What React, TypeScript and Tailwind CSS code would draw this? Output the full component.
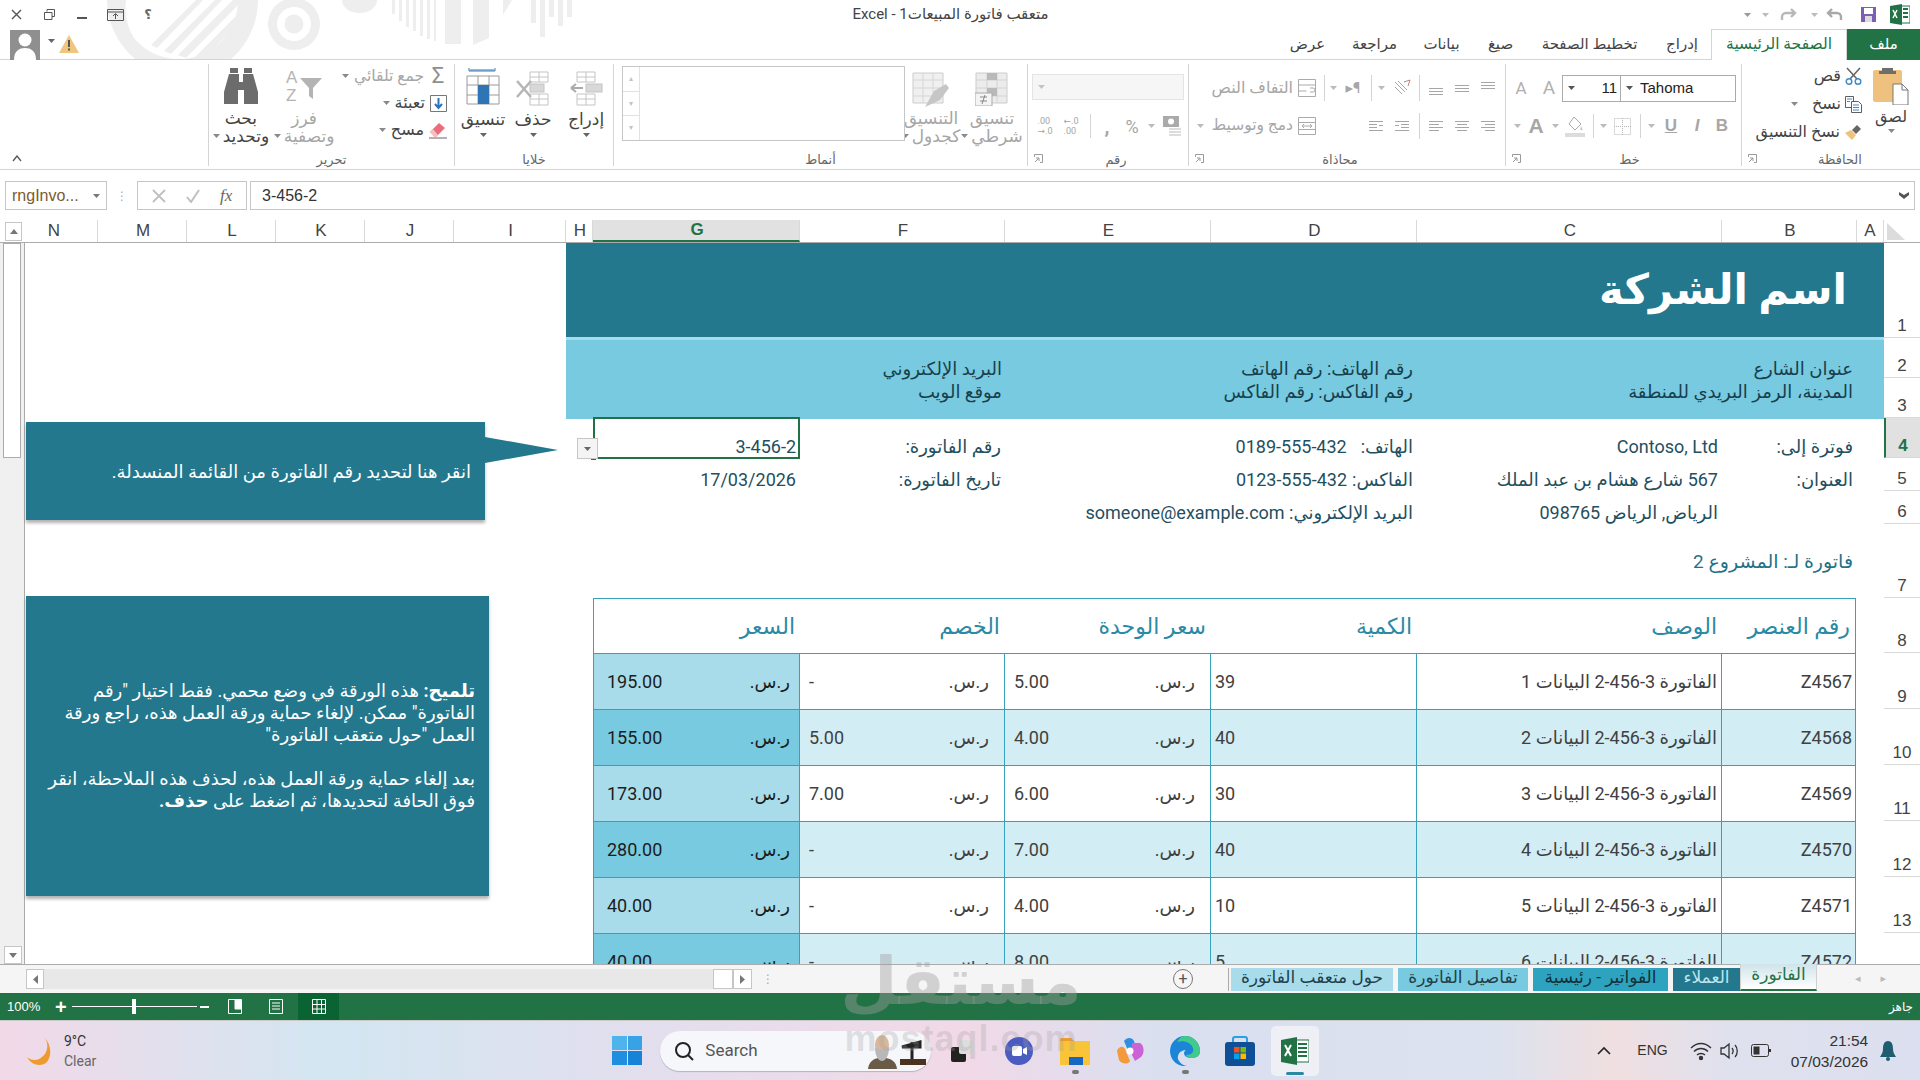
import type { ReactNode } from "react"

const sep = "w-px self-stretch bg-[#d4d4d4]"

function Caret({ color = "#8a8a8a" }: { color?: string }) {
  return (
    <svg width="7" height="4" viewBox="0 0 7 4">
      <path d="M0 0h7L3.5 4z" fill={color} />
    </svg>
  )
}

function Launcher() {
  return (
    <svg width="9" height="9" viewBox="0 0 9 9" fill="none" stroke="#9a9a9a">
      <path d="M.5 3V.5H8.5V8.5H6M1 8l4-4M5 7V4H2" />
    </svg>
  )
}

function Group({ className, label, labelClass = "", launcher, children }: { className: string; label: string; labelClass?: string; launcher?: boolean; children: ReactNode }) {
  return (
    <div className={`relative flex h-[102px] shrink-0 flex-col border-l border-[#d4d4d4] ${className}`}>
      <div className="h-[87px]">{children}</div>
      <div className={`h-[15px] text-center text-[13px] leading-[18px] text-[#666] ${labelClass}`}>{label}</div>
      {launcher ? (
        <div className="absolute bottom-[3px] left-[6px]">
          <Launcher />
        </div>
      ) : null}
    </div>
  )
}

function Slot({ className, children }: { className: string; children?: ReactNode }) {
  return <div className={`flex shrink-0 items-center justify-center ${className}`}>{children}</div>
}

function Lines({ rows }: { rows: number[][] }) {
  return (
    <svg width="16" height="14" viewBox="0 0 16 14" stroke="#a6a6a6">
      {rows.map((r, i) => (
        <path key={i} d={`M${r[0]} ${r[2]}.5H${r[1]}`} />
      ))}
    </svg>
  )
}

function BigLabel({ top, bottom, color = "text-[#a6a6a6]" }: { top: string; bottom: string; color?: string }) {
  return (
    <div className={`flex flex-col items-center text-[17px] leading-[18px] ${color}`}>
      <span className="whitespace-nowrap">{top}</span>
      <span className="flex items-center gap-[3px] whitespace-nowrap">
        {bottom}
        <Caret />
      </span>
    </div>
  )
}

function Ribbon() {
  return (
    <div dir="rtl" className="flex h-[110px] items-start border-b border-[#d4d4d4] bg-white pt-[4px]">
      <Group className="w-[179px]" label="الحافظة" labelClass="pl-[18px]" launcher>
        <div className="flex">
          <div className="flex w-[58px] flex-col items-center pt-[3px] text-[16px] text-[#444]">
            <svg width="36" height="38" viewBox="0 0 36 38">
              <rect x="0" y="3" width="29" height="32" rx="2" fill="#eec17e" />
              <path d="M9 4V1h11v3h3v3H6V4z" fill="#6e6e6e" />
              <path d="M20 17h9l6 6v15H20z" fill="#fff" stroke="#777" />
              <path d="M29 17v6h6" fill="none" stroke="#777" />
            </svg>
            <span className="mt-[2px] leading-[20px]">لصق</span>
            <div className="mt-[2px] leading-[8px]">
              <Caret />
            </div>
          </div>
          <div className="flex flex-col gap-[6px] pt-[1px] text-[16px] leading-[22px] text-[#444]">
            <div className="flex items-center gap-[4px]">
              <svg width="17" height="18" viewBox="0 0 17 18" fill="none">
                <path d="M2 1l10 11M15 1L5 12" stroke="#666" strokeWidth="1.6" />
                <circle cx="4" cy="14.5" r="2.8" stroke="#3d8bc9" strokeWidth="1.4" />
                <circle cx="13" cy="14.5" r="2.8" stroke="#3d8bc9" strokeWidth="1.4" />
              </svg>
              <span>قص</span>
            </div>
            <div className="flex items-center gap-[4px]">
              <svg width="17" height="17" viewBox="0 0 17 17" fill="#fff" stroke="#5f5f5f">
                <path d="M.5.5h8v11h-8z" />
                <path d="M6.5 5.5h7l3 3v8h-10z" />
                <path d="M8 9h6M8 11.5h6M8 14h6M2 3h5M2 5.500h3" stroke="#3d8bc9" />
              </svg>
              <span>نسخ</span>
              <span className="mr-[10px]">
                <Caret />
              </span>
            </div>
            <div className="flex items-center gap-[4px]">
              <svg width="18" height="17" viewBox="0 0 18 17">
                <path d="M1 9l7 7 4-5-5-5z" fill="#efc27b" />
                <path d="M8 6l5-5 4 4-5 5z" fill="#666" />
              </svg>
              <span className="whitespace-nowrap">نسخ التنسيق</span>
            </div>
          </div>
        </div>
      </Group>

      <Group className="w-[236px]" label="خط" labelClass="pl-[12px]" launcher>
        <div className="flex items-center pt-[10px] pr-[5px]">
          <div dir="ltr" className="flex h-[27px] w-[174px] flex-row-reverse border border-[#ababab] text-[14px] text-[#222]">
            <div className="flex w-[114px] items-center gap-[7px] pl-[5px]">
              <Caret color="#555" />
              <span className="font-['Liberation_Sans',sans-serif] text-[15px]">Tahoma</span>
            </div>
            <div className="flex flex-1 items-center justify-between border-r border-[#ababab] pr-[3px] pl-[5px]">
              <Caret color="#555" />
              <span className="font-['Liberation_Sans',sans-serif] text-[15px]">11</span>
            </div>
          </div>
          <Slot className="w-[26px] text-[19px] text-[#b0b0b0]">A</Slot>
          <Slot className="w-[30px] text-[17px] text-[#b0b0b0]">A</Slot>
        </div>
        <div dir="rtl" className="flex h-[33px] items-center pt-[14px] pr-[7px] font-['Liberation_Sans',sans-serif] text-[#a6a6a6]">
          <Slot className="w-[24px] text-[17px] font-bold">B</Slot>
          <Slot className="w-[26px] text-[17px] italic font-bold">I</Slot>
          <Slot className="w-[26px] text-[17px] font-bold underline">U</Slot>
          <Slot className="w-[14px]"><Caret color="#bbb" /></Slot>
          <Slot className="h-[24px] w-[8px]"><div className={sep} /></Slot>
          <Slot className="w-[28px]">
            <svg width="17" height="17" viewBox="0 0 17 17" fill="none" stroke="#b5b5b5" strokeDasharray="1 1">
              <path d="M.5.5h16v16H.5zM8.500 0v17M0 8.500h17" />
            </svg>
          </Slot>
          <Slot className="w-[10px]"><Caret color="#bbb" /></Slot>
          <Slot className="h-[24px] w-[10px]"><div className={sep} /></Slot>
          <Slot className="w-[26px]">
            <svg width="20" height="21" viewBox="0 0 20 21" fill="none">
              <path d="M9 1l7 7-6 6-6-6z" stroke="#aaa" />
              <path d="M16 10l2 4h-3z" fill="#ccc" />
              <rect x="0" y="17" width="20" height="4" fill="#dcdcdc" />
            </svg>
          </Slot>
          <Slot className="w-[14px]"><Caret color="#bbb" /></Slot>
          <Slot className="w-[24px] text-[21px] font-bold">A</Slot>
          <Slot className="w-[14px]"><Caret color="#bbb" /></Slot>
        </div>
      </Group>

      <Group className="w-[317px]" label="محاذاة" labelClass="pr-[14px]" launcher>
        <div className="flex h-[40px] items-center pr-[4px] pt-[8px]">
          <Slot className="w-[26px]"><Lines rows={[[1, 15, 1], [1, 15, 4], [1, 15, 7]]} /></Slot>
          <Slot className="w-[26px]"><Lines rows={[[1, 15, 4], [1, 15, 7], [1, 15, 10]]} /></Slot>
          <Slot className="w-[26px]"><Lines rows={[[1, 15, 7], [1, 15, 10], [1, 15, 13]]} /></Slot>
          <Slot className="h-[26px] w-[8px]"><div className={sep} /></Slot>
          <Slot className="w-[28px]">
            <svg width="19" height="18" viewBox="0 0 19 18" fill="none" stroke="#aaa">
              <path d="M3 3l10 10M6 2l9 9M3 8l7 7" />
              <path d="M12 3l6-2-2 6" stroke="#b88" />
            </svg>
          </Slot>
          <Slot className="w-[12px]"><Caret color="#bbb" /></Slot>
          <Slot className="h-[26px] w-[8px]"><div className={sep} /></Slot>
          <Slot className="w-[28px] text-[15px] text-[#a6a6a6]">
            <span dir="ltr">▸¶</span>
          </Slot>
          <Slot className="w-[12px]"><Caret color="#bbb" /></Slot>
          <Slot className="h-[26px] w-[6px]"><div className={sep} /></Slot>
          <Slot className="w-[28px]">
            <svg width="18" height="18" viewBox="0 0 18 18" fill="none" stroke="#aaa">
              <path d="M.5.5h17v17H.5zM.5 6h17M.5 12h8M12 9h3a2 2 0 010 4h-3" />
            </svg>
          </Slot>
          <span className="whitespace-nowrap text-[16px] text-[#a6a6a6]">التفاف النص</span>
        </div>
        <div className="flex h-[38px] items-center pr-[4px] pt-[6px]">
          <Slot className="w-[26px]"><Lines rows={[[1, 15, 2], [5, 15, 5], [1, 15, 8], [5, 15, 11]]} /></Slot>
          <Slot className="w-[26px]"><Lines rows={[[1, 15, 2], [3, 13, 5], [1, 15, 8], [3, 13, 11]]} /></Slot>
          <Slot className="w-[26px]"><Lines rows={[[1, 15, 2], [1, 11, 5], [1, 15, 8], [1, 11, 11]]} /></Slot>
          <Slot className="h-[26px] w-[8px]"><div className={sep} /></Slot>
          <Slot className="w-[26px]"><Lines rows={[[1, 15, 2], [7, 15, 5], [1, 5, 6], [7, 15, 8], [1, 15, 11]]} /></Slot>
          <Slot className="w-[26px]"><Lines rows={[[1, 15, 2], [1, 9, 5], [11, 15, 6], [1, 9, 8], [1, 15, 11]]} /></Slot>
          <div className="w-[42px]" />
          <Slot className="w-[28px]">
            <svg width="18" height="18" viewBox="0 0 18 18" fill="none" stroke="#aaa">
              <path d="M.5.5h17v17H.5zM.5 5.500h17M.5 12.500h17M4 9h10M4 9l2-2M4 9l2 2M14 9l-2-2M14 9l-2 2" />
            </svg>
          </Slot>
          <span className="whitespace-nowrap text-[15.5px] text-[#a6a6a6]">دمج وتوسيط</span>
          <span className="mr-[8px]"><Caret color="#bbb" /></span>
        </div>
      </Group>

      <Group className="w-[161px]" label="رقم" labelClass="pl-[16px]" launcher>
        <div className="h-[40px] pt-[10px] pr-[4px]">
          <div dir="ltr" className="flex h-[26px] w-[152px] items-center border border-[#e4e4e4] bg-[#f6f6f6] pl-[5px]">
            <Caret color="#c4c4c4" />
          </div>
        </div>
        <div className="flex h-[38px] items-center pt-[6px] text-[#a6a6a6]">
          <Slot className="w-[32px]">
            <svg width="19" height="20" viewBox="0 0 19 20">
              <rect x="0" y="0" width="16" height="11" fill="#aaa" />
              <circle cx="8" cy="5.500" r="3" fill="#fff" />
              <path d="M6 13h12M6 16h12M6 19h12" stroke="#bbb" />
            </svg>
          </Slot>
          <Slot className="w-[10px]"><Caret color="#bbb" /></Slot>
          <Slot className="w-[28px] text-[18px]">%</Slot>
          <Slot className="w-[22px] text-[20px] font-bold">,</Slot>
          <Slot className="h-[24px] w-[12px]"><div className={sep} /></Slot>
          <Slot className="w-[26px]">
            <div dir="ltr" className="text-[9px] leading-[10px]">←.0<br />.00</div>
          </Slot>
          <Slot className="w-[26px]">
            <div dir="ltr" className="text-[9px] leading-[10px]">.00<br />→.0</div>
          </Slot>
        </div>
      </Group>

      <Group className="w-[414px]" label="أنماط">
        <div className="flex">
          <div className="flex w-[70px] flex-col items-center pt-[8px]">
            <svg width="34" height="34" viewBox="0 0 34 34" fill="none">
              <path d="M1 1h31v30H1z" fill="#ececec" stroke="#ccc" />
              <path d="M1 8h31M1 16h31M1 24h31M12 1v30M22 1v30" stroke="#d2d2d2" />
              <rect x="12" y="1" width="10" height="7" fill="#b9b9b9" />
              <rect x="12" y="16" width="10" height="8" fill="#b9b9b9" />
              <rect x="0" y="21" width="17" height="13" fill="#f4f4f4" stroke="#aaa" />
              <path d="M5 25h7M5 29h7M10 23l-3 9" stroke="#888" />
            </svg>
            <div className="mt-[3px]"><BigLabel top="تنسيق" bottom="شرطي" /></div>
          </div>
          <div className="flex w-[52px] flex-col items-center pt-[8px]">
            <svg width="40" height="36" viewBox="0 0 40 36" fill="none">
              <path d="M2 1h30v30H2z" fill="#f0f0f0" stroke="#ccc" />
              <path d="M2 8h30M2 16h30M2 24h30M12 1v30M22 1v30" stroke="#d6d6d6" />
              <path d="M14 35l9-16 12-7 3 4-9 12z" fill="#c6c6c6" />
            </svg>
            <div className="mt-[1px]"><BigLabel top="التنسيق" bottom="كجدول" /></div>
          </div>
          <div className="mt-[2px] flex h-[75px] w-[283px] border border-[#c6c6c6] bg-white">
            <div className="flex-1" />
            <div className="flex w-[17px] flex-col border-r border-[#e2e2e2] text-[8px] text-[#c4c4c4]">
              <div className="flex flex-1 items-center justify-center border-b border-[#e2e2e2]">▴</div>
              <div className="flex flex-1 items-center justify-center border-b border-[#e2e2e2]">▾</div>
              <div className="flex flex-1 items-center justify-center">▾</div>
            </div>
          </div>
        </div>
      </Group>

      <Group className="w-[159px]" label="خلايا">
        <div className="flex pt-[4px] text-[17px] leading-[21px] text-[#444]">
          <div className="flex w-[54px] flex-col items-center">
            <svg width="34" height="38" viewBox="0 0 34 38" fill="none" stroke="#c4c4c4">
              <path d="M8 4h18v10H8zM17 4v10M8 9h18M8 26h18v11H8zM17 26v11M8 31h18" />
              <rect x="17" y="16" width="16" height="8" fill="#d8d8d8" />
              <path d="M2 20h12M2 20l5-4M2 20l5 4" stroke="#aaa" strokeWidth="2" />
            </svg>
            <span className="mt-[3px]">إدراج</span>
            <div className="mt-[3px] leading-[8px]"><Caret color="#666" /></div>
          </div>
          <div className="flex w-[52px] flex-col items-center">
            <svg width="36" height="38" viewBox="0 0 36 38" fill="none" stroke="#c4c4c4">
              <path d="M15 4h18v10H15zM24 4v10M15 9h18M15 26h18v11H15zM24 26v11M15 31h18" />
              <rect x="15" y="16" width="14" height="8" fill="#d8d8d8" />
              <path d="M2 13l14 16M16 13L2 29" stroke="#b5b5b5" strokeWidth="2.500" />
            </svg>
            <span className="mt-[3px]">حذف</span>
            <div className="mt-[3px] leading-[8px]"><Caret color="#666" /></div>
          </div>
          <div className="flex w-[48px] flex-col items-center">
            <svg width="34" height="38" viewBox="0 0 34 38" fill="none" stroke="#9a9a9a">
              <path d="M3 0v3h26V0M4 2h24" stroke="#3d7bb8" />
              <path d="M1 8h32v28H1zM1 17h32M1 27h32M12 8v28M23 8v28" />
              <rect x="12" y="17" width="11" height="10" fill="#2f75b5" stroke="none" />
              <rect x="12" y="27" width="11" height="9" fill="#2f75b5" stroke="none" />
            </svg>
            <span className="mt-[3px]">تنسيق</span>
            <div className="mt-[3px] leading-[8px]"><Caret color="#666" /></div>
          </div>
        </div>
      </Group>

      <Group className="w-[246px]" label="تحرير">
        <div className="flex">
          <div className="flex w-[119px] flex-col gap-[5px] pt-[1px] pr-[7px] text-[16px] leading-[22px]">
            <div className="flex items-center gap-[5px] text-[#a6a6a6]">
              <span className="w-[18px] text-center text-[22px] leading-[22px] text-[#8f8f8f]">Σ</span>
              <span className="whitespace-nowrap text-[15.5px]">جمع تلقائي</span>
              <Caret />
            </div>
            <div className="flex items-center gap-[5px] text-[#444]">
              <svg width="17" height="17" viewBox="0 0 17 17" fill="none">
                <path d="M.5.5h16v16H.5z" stroke="#777" />
                <path d="M8.500 3v9M5 9l3.500 4L12 9" stroke="#2f75b5" strokeWidth="2" />
              </svg>
              <span>تعبئة</span>
              <Caret />
            </div>
            <div className="flex items-center gap-[5px] text-[#444]">
              <svg width="18" height="17" viewBox="0 0 18 17">
                <path d="M1 10l9-9 6 5-9 9z" fill="#e96d7a" />
                <path d="M1 10l4 5h2l2-2-5-6z" fill="#f3c0c0" />
                <path d="M0 16h18" stroke="#666" />
              </svg>
              <span>مسح</span>
              <Caret />
            </div>
          </div>
          <div className="flex w-[63px] flex-col items-center pt-[4px]">
            <svg width="36" height="36" viewBox="0 0 36 36" direction="ltr">
              <text x="0" y="15" fontSize="17" fill="#b4b4b4" fontFamily="Liberation Sans" direction="ltr">A</text>
              <text x="0" y="33" fontSize="17" fill="#b4b4b4" fontFamily="Liberation Sans" direction="ltr">Z</text>
              <path d="M14 10h22l-9 10v11l-4-3v-8z" fill="#b4b4b4" />
            </svg>
            <div className="mt-[5px]"><BigLabel top="فرز" bottom="وتصفية" /></div>
          </div>
          <div className="flex w-[64px] flex-col items-center pt-[4px]">
            <svg width="34" height="36" viewBox="0 0 34 36" fill="#6c6c6c">
              <path d="M6 0h8v5H6zM20 0h8v5h-8z" />
              <path d="M5 6h10v8h4V6h10l5 18v12H20V22h-6v14H0V24z" />
            </svg>
            <div className="mt-[5px]"><BigLabel top="بحث" bottom="وتحديد" color="text-[#444]" /></div>
          </div>
        </div>
      </Group>

      <div className="flex h-[102px] flex-1 items-end pb-[4px] pr-[186px] text-[#555]">
        <svg width="10" height="7" viewBox="0 0 10 7" fill="none" stroke="#555" strokeWidth="1.300">
          <path d="M1 6l4-5 4 5" />
        </svg>
      </div>
    </div>
  )
}

function TitleBar() {
  return (
    <div className="relative h-[29px]">
      <div className="flex h-[29px] items-center">
        <Slot className="w-[33px] text-[#555]">
          <svg width="11" height="11" viewBox="0 0 11 11" stroke="#555" strokeWidth="1.400"><path d="M1 1l9 9M10 1l-9 9" /></svg>
        </Slot>
        <Slot className="w-[33px]">
          <svg width="11" height="11" viewBox="0 0 11 11" fill="none" stroke="#555"><path d="M3 2.500V.5h7.500v7H8M.5 3.500h7.500v7H.5z" /></svg>
        </Slot>
        <Slot className="w-[32px]"><div className="mt-[7px] h-[2px] w-[10px] bg-[#555]" /></Slot>
        <Slot className="w-[34px]">
          <svg width="17" height="12" viewBox="0 0 17 12" fill="none" stroke="#555"><path d="M.5.5h16v11H.5zM.5 3h16M8.500 10V5M6 7l2.500-2.500L11 7" /></svg>
        </Slot>
        <Slot className="w-[32px] text-[13px] font-bold text-[#666]">؟</Slot>
        <div dir="rtl" className="flex-1 text-center text-[15px] text-[#444]">
          متعقب فاتورة المبيعات1 - Excel
        </div>
        <div className="flex items-center">
          <Slot className="w-[20px]"><Caret color="#999" /></Slot>
          <Slot className="w-[16px]"><Caret color="#bbb" /></Slot>
          <Slot className="ml-[4px] w-[24px]">
            <svg width="18" height="14" viewBox="0 0 18 14" fill="none" stroke="#b8b8b8" strokeWidth="2.400"><path d="M16 12V9a4 4 0 00-4-4H3M7 1L3 5l4 4" transform="matrix(-1 0 0 1 18 0)" /></svg>
          </Slot>
          <Slot className="ml-[4px] w-[18px]"><Caret color="#bbb" /></Slot>
          <Slot className="w-[22px]">
            <svg width="18" height="14" viewBox="0 0 18 14" fill="none" stroke="#a8a8a8" strokeWidth="2.400"><path d="M16 12V9a4 4 0 00-4-4H3M7 1L3 5l4 4" /></svg>
          </Slot>
          <Slot className="ml-[12px] w-[22px]">
            <svg width="15" height="15" viewBox="0 0 15 15"><rect width="15" height="15" fill="#7b5fb0" /><rect x="3" y="1" width="9" height="6" fill="#fff" /><rect x="4" y="9" width="7" height="6" fill="#dcdcdc" /></svg>
          </Slot>
          <Slot className="w-[41px]">
            <svg width="20" height="21" viewBox="0 0 20 21">
              <rect x="6" y="2" width="14" height="17" fill="#fff" stroke="#217346" />
              <path d="M13 5h5M13 9h5M13 13h5" stroke="#217346" strokeWidth="2" />
              <path d="M0 2l12-2v21L0 19z" fill="#217346" />
              <path d="M3 6l4 8M7 6l-4 8" stroke="#fff" strokeWidth="1.500" />
            </svg>
          </Slot>
        </div>
      </div>
    </div>
  )
}

const otherTabs = [
  { label: "عرض", cls: "w-[67px]" },
  { label: "مراجعة", cls: "w-[67px]" },
  { label: "بيانات", cls: "w-[67px]" },
  { label: "صيغ", cls: "w-[51px]" },
  { label: "تخطيط الصفحة", cls: "w-[127px]" },
  { label: "إدراج", cls: "w-[58px]" },
]

function TabRow() {
  return (
    <div className="relative flex h-[31px] items-end justify-between">
      <div className="absolute bottom-0 left-0 h-px w-full bg-[#d4d4d4]" />
      <div className="relative flex h-[30px] items-start">
        <svg width="31" height="30" viewBox="0 0 31 30" className="ml-[10px]">
          <rect width="30" height="30" fill="#8f8f8f" />
          <circle cx="15" cy="10" r="6.500" fill="#fff" />
          <path d="M4 30c0-9 5-12 11-12s11 3 11 12z" fill="#fff" />
        </svg>
        <div className="ml-[7px] mt-[9px]"><Caret color="#666" /></div>
        <svg width="20" height="18" viewBox="0 0 20 18" className="ml-[4px] mt-[5px]">
          <path d="M10 0l10 18H0z" fill="#f0c57e" />
          <path d="M9 5h2v7H9zM9 13.500h2v2H9z" fill="#555" />
        </svg>
      </div>
      <div dir="rtl" className="relative flex h-[31px] items-end text-[15px] text-[#444]">
        <div className="flex h-[31px] w-[73px] items-center justify-center bg-[#217346] text-white">ملف</div>
        <div className="flex h-[31px] w-[136px] items-center justify-center border-x border-t border-[#d4d4d4] bg-white text-[15.5px] text-[#217346]">الصفحة الرئيسية</div>
        {otherTabs.slice().reverse().map((t) => (
          <div key={t.label} className={`flex h-[31px] items-center justify-center ${t.cls}`}>{t.label}</div>
        ))}
      </div>
    </div>
  )
}

function TitleArt() {
  // office background doodle behind the title bar
  return (
    <svg width="520" height="59" viewBox="100 0 520 59" className="absolute left-[100px] top-0" fill="#eeeeee">
      <path fillRule="evenodd" d="M107 0a78 78 0 00 28 59h96a78 78 0 0027-59h-20a58 58 0 01-20 44 58 58 0 01-84-6 58 58 0 01-8-38z" />
      <path d="M151 45L196 0h7L157 48zM164 51L215 0h7L171 54zM178 55L233 0h5v5L186 58zM195 57L238 14v9L204 58z" />
      <path fillRule="evenodd" d="M294 -2a26 26 0 100 52 26 26 0 000-52zm0 9a17 17 0 110 34 17 17 0 010-34z" />
      <circle cx="294" cy="24" r="9.500" />
      <path d="M342 0h35a17.500 13 0 01-35 0z" />
      <path d="M392 0h3v14h-3zM399 0h3v21h-3zM406 0h3v27h-3zM413 0h3v31h-3zM420 0h3v36h-3zM427 0h3v39h-3zM434 0h2v41h-2zM445 0h16v44h-16zM473 0h16v38l-16 7zM503 0h9l-9 15zM531 0h5v23h-5zM540 0h5v37h-5zM549 0h5v17h-5zM558 0h5v26h-5zM567 0h5v17h-5z" />
    </svg>
  )
}

function FormulaBar() {
  return (
    <div className="flex h-[50px] items-center gap-[3px] bg-white pb-[10px] pt-[11px] pl-[5px] pr-[5px]">
      <div className="flex h-[29px] w-[102px] items-center justify-between border border-[#c6c6c6] px-[6px] font-['Liberation_Sans',sans-serif] text-[16px] text-[#7b5b32]">
        <span>rngInvo...</span>
        <Caret color="#777" />
      </div>
      <Slot className="w-[24px] text-[12px] text-[#aaa]">⋮</Slot>
      <div className="flex h-[29px] w-[110px] items-center justify-around border border-[#c6c6c6] px-[4px]">
        <svg width="14" height="14" viewBox="0 0 14 14" stroke="#c0c0c0" strokeWidth="1.800"><path d="M1 1l12 12M13 1L1 13" /></svg>
        <svg width="16" height="14" viewBox="0 0 16 14" fill="none" stroke="#c0c0c0" strokeWidth="2"><path d="M2 8l4 5 8-12" /></svg>
        <span className="font-['Liberation_Serif',serif] text-[17px] italic text-[#666]">fx</span>
      </div>
      <div className="flex h-[29px] flex-1 items-center justify-between border border-[#c6c6c6] pl-[11px] pr-[5px] font-['Liberation_Sans',sans-serif] text-[16px] text-[#333]">
        <span>3-456-2</span>
        <svg width="10" height="7" viewBox="0 0 10 7" fill="#555"><path d="M0 0l5 3 5-3v3L5 7 0 3z" /></svg>
      </div>
    </div>
  )
}

const headCols = [
  { l: "N", c: "w-[73px] pr-[14px]" },
  { l: "M", c: "w-[89px] pl-[2px]" },
  { l: "L", c: "w-[89px] pl-[2px]" },
  { l: "K", c: "w-[89px] pl-[2px]" },
  { l: "J", c: "w-[89px] pl-[2px]" },
  { l: "I", c: "w-[112px] pl-[2px]" },
  { l: "H", c: "w-[27px] pl-[2px]" },
  { l: "G", c: "w-[207px] pl-[2px]" },
  { l: "F", c: "w-[205px] pl-[2px]" },
  { l: "E", c: "w-[206px] pl-[2px]" },
  { l: "D", c: "w-[206px] pl-[2px]" },
  { l: "C", c: "w-[305px] pl-[2px]" },
  { l: "B", c: "w-[135px] pl-[2px]" },
  { l: "A", c: "w-[27px]" },
]

function ColumnHeaders() {
  return (
    <div className="flex h-[23px] border-b border-[#ababab] bg-white font-['Liberation_Sans',sans-serif] text-[17px] text-[#444]">
      <div className="w-[25px] pl-[5px] pt-[2px]">
        <div className="flex h-[19px] w-[17px] items-center justify-center border border-[#c6c6c6]">
          <svg width="8" height="5" viewBox="0 0 8 5"><path d="M0 5h8L4 0z" fill="#777" /></svg>
        </div>
      </div>
      {headCols.map((col) => (
        <div
          key={col.l}
          className={`flex items-center justify-center border-r border-[#d9d9d9] ${col.c} ${col.l === "G" ? "border-b-2 border-b-[#217346] bg-[#e1e1e1] font-bold text-[#217346]" : ""}`}
        >
          {col.l}
        </div>
      ))}
      <div className="flex-1 pl-[3px] pt-[3px]">
        <svg width="18" height="17" viewBox="0 0 18 17"><path d="M0 0l18 17H0z" fill="#dcdcdc" /></svg>
      </div>
    </div>
  )
}

const rowHeads = [
  { n: 1, c: "h-[95px]" },
  { n: 2, c: "h-[40px]" },
  { n: 3, c: "h-[40px]" },
  { n: 4, c: "h-[40px]" },
  { n: 5, c: "h-[33px]" },
  { n: 6, c: "h-[33px]" },
  { n: 7, c: "h-[74px]" },
  { n: 8, c: "h-[55px]" },
  { n: 9, c: "h-[56px]" },
  { n: 10, c: "h-[56px]" },
  { n: 11, c: "h-[56px]" },
  { n: 12, c: "h-[56px]" },
  { n: 13, c: "h-[56px]" },
]

function RowHeaders() {
  return (
    <div className="w-[36px] shrink-0 font-['Liberation_Sans',sans-serif] text-[17px] leading-[20px] text-[#444]">
      {rowHeads.map((r) => (
        <div
          key={r.n}
          className={`flex items-end justify-center border-b border-[#d9d9d9] pb-[1px] ${r.c} ${r.n === 4 ? "border-l-2 border-l-[#217346] bg-[#e1e1e1] font-bold text-[#217346]" : ""}`}
        >
          {r.n}
        </div>
      ))}
    </div>
  )
}

const invoiceRows = [
  { id: "Z4567", n: 1, qty: "39", unit: "5.00", disc: "-", total: "195.00" },
  { id: "Z4568", n: 2, qty: "40", unit: "4.00", disc: "5.00", total: "155.00" },
  { id: "Z4569", n: 3, qty: "30", unit: "6.00", disc: "7.00", total: "173.00" },
  { id: "Z4570", n: 4, qty: "40", unit: "7.00", disc: "-", total: "280.00" },
  { id: "Z4571", n: 5, qty: "10", unit: "4.00", disc: "-", total: "40.00" },
  { id: "Z4572", n: 6, qty: "5", unit: "8.00", disc: "-", total: "40.00" },
]

function InvoiceTable() {
  const head = "flex items-center justify-start pr-[5px] text-[22px] text-[#2a8aa6]"
  return (
    <div className="ml-[27px] w-[1263px] border-t border-l border-r border-[#37a0bb]" dir="ltr">
      <div className="flex h-[55px] border-b border-[#37a0bb]">
        <div dir="rtl" className={`w-[206px] ${head}`}>السعر</div>
        <div dir="rtl" className={`w-[205px] ${head}`}>الخصم</div>
        <div dir="rtl" className={`w-[206px] ${head}`}>سعر الوحدة</div>
        <div dir="rtl" className={`w-[206px] ${head}`}>الكمية</div>
        <div dir="rtl" className={`w-[305px] ${head}`}>الوصف</div>
        <div dir="rtl" className={`flex-1 ${head}`}>رقم العنصر</div>
      </div>
      {invoiceRows.map((r, i) => {
        const odd = i % 2 === 0
        return (
          <div key={r.id} className={`flex h-[56px] border-b border-[#37a0bb] text-[18px] text-[#404040] ${odd ? "bg-white" : "bg-[#d3edf5]"}`}>
            <div className={`flex w-[206px] items-center justify-between border-r border-[#37a0bb] pl-[13px] pr-[9px] text-[#1c1c1c] ${odd ? "bg-[#a9dcea]" : "bg-[#78cae0]"}`}>
              <span>{r.total}</span>
              <span dir="rtl">ر.س.</span>
            </div>
            <div className="flex w-[205px] items-center justify-between border-r border-[#37a0bb] pl-[9px] pr-[15px]">
              <span>{r.disc}</span>
              <span dir="rtl">ر.س.</span>
            </div>
            <div className="flex w-[206px] items-center justify-between border-r border-[#37a0bb] pl-[9px] pr-[15px]">
              <span>{r.unit}</span>
              <span dir="rtl">ر.س.</span>
            </div>
            <div className="flex w-[206px] items-center border-r border-[#37a0bb] pl-[4px]">{r.qty}</div>
            <div dir="rtl" className="flex w-[305px] items-center border-r border-[#37a0bb] pr-[4px]">
              {`الفاتورة 3-456-2 البيانات ${r.n}`}
            </div>
            <div className="flex flex-1 items-center justify-end pr-[3px]">{r.id}</div>
          </div>
        )
      })}
    </div>
  )
}

function InfoRows() {
  const label = "flex items-end pr-[4px] pb-[0px] text-[18px] leading-[22px] text-[#1f4f60] whitespace-nowrap"
  return (
    <div dir="rtl" className="text-[#1f4f60]">
      <div className="flex h-[39px] pr-[27px]">
        <div className={`w-[135px] ${label}`}>فوترة إلى:</div>
        <div className={`w-[305px] ${label}`}><span dir="ltr">Contoso, Ltd</span></div>
        <div className={`w-[412px] ${label} gap-[14px]`}><span>الهاتف:</span><span dir="ltr">0189-555-432</span></div>
        <div className={`w-[205px] ${label}`}>رقم الفاتورة:</div>
        <div className={`relative w-[207px] ${label}`}>
          <span dir="ltr">3-456-2</span>
          <div className="absolute -top-[2px] left-0 right-0 -bottom-px border-2 border-[#217346]" />
          <div className="absolute -bottom-[2px] left-[-2px] h-[5px] w-[5px] bg-[#217346]" />
          <div dir="ltr" className="absolute -bottom-[1px] left-[-16px] flex h-[21px] w-[21px] items-center justify-center border border-[#c6c6c6] bg-[#f4f4f4]">
            <Caret color="#666" />
          </div>
        </div>
      </div>
      <div className="flex h-[33px] pr-[27px]">
        <div className={`w-[135px] ${label}`}>العنوان:</div>
        <div className={`w-[305px] ${label}`}>567 شارع هشام بن عبد الملك</div>
        <div className={`w-[412px] ${label} gap-[5px]`}><span>الفاكس:</span><span dir="ltr">0123-555-432</span></div>
        <div className={`w-[205px] ${label}`}>تاريخ الفاتورة:</div>
        <div className={`w-[207px] ${label}`}><span dir="ltr">17/03/2026</span></div>
      </div>
      <div className="flex h-[33px] pr-[27px]">
        <div className="w-[135px]" />
        <div className={`w-[305px] ${label}`}>الرياض, الرياض 098765</div>
        <div className={`w-[412px] ${label}`}>البريد الإلكتروني: someone@example.com</div>
      </div>
      <div className="flex h-[74px] items-start pr-[31px] pt-[24px] text-[19px] text-[#1f7288]">فاتورة لـ: المشروع 2</div>
    </div>
  )
}

function Sheet() {
  return (
    <div className="flex h-[721px] overflow-hidden">
      <div className="flex w-[25px] shrink-0 flex-col border-r border-[#ababab] bg-[#f0f0f0]">
        <div className="ml-[3px] h-[215px] w-[18px] border border-[#ababab] bg-white" />
        <div className="flex-1" />
        <div className="ml-[4px] flex h-[18px] w-[18px] items-center justify-center border border-[#c6c6c6] bg-white">
          <svg width="8" height="5" viewBox="0 0 8 5"><path d="M0 0h8L4 5z" fill="#777" /></svg>
        </div>
      </div>

      <div className="relative w-[541px] shrink-0 bg-white" dir="rtl">
        <div className="absolute left-[1px] top-[179px] flex h-[98px] w-[459px] items-center bg-[#23788d] pr-[14px] text-[18px] text-white shadow-[0_3px_3px_rgba(0,0,0,0.3)]">
          انقر هنا لتحديد رقم الفاتورة من القائمة المنسدلة.
        </div>
        <svg width="74" height="27" viewBox="0 0 74 27" className="absolute left-[460px] top-[194px]">
          <path d="M0 0l73 13L0 26z" fill="#23788d" />
        </svg>
        <div className="absolute left-[1px] top-[353px] flex h-[300px] w-[463px] flex-col justify-center bg-[#23788d] pl-[8px] pr-[14px] text-[18px] leading-[22px] text-white shadow-[0_3px_3px_rgba(0,0,0,0.3)]">
          <p><b>تلميح:</b> هذه الورقة في وضع محمي. فقط اختيار "رقم الفاتورة" ممكن. لإلغاء حماية ورقة العمل هذه، راجع ورقة العمل "حول متعقب الفاتورة"</p>
          <p className="mt-[22px]">بعد إلغاء حماية ورقة العمل هذه، لحذف هذه الملاحظة، انقر فوق الحافة لتحديدها، ثم اضغط على <b>حذف.</b></p>
        </div>
      </div>

      <div className="w-[1318px] shrink-0 bg-white">
        <div dir="rtl" className="flex h-[94px] items-center bg-[#23788d] pr-[37px] pb-[2px] text-[42px] font-bold text-white">
          اسم الشركة
        </div>
        <div className="h-[3px] bg-[#a9dcea]" />
        <div dir="rtl" className="flex h-[79px] bg-[#78cae0] pt-[17px] text-[18px] leading-[23px] text-[#173f4c]">
          <div className="w-[471px] pr-[31px]">
            <p>عنوان الشارع</p>
            <p>المدينة، الرمز البريدي للمنطقة</p>
          </div>
          <div className="w-[411px]">
            <p>رقم الهاتف: رقم الهاتف</p>
            <p>رقم الفاكس: رقم الفاكس</p>
          </div>
          <div className="w-[300px]">
            <p>البريد الإلكتروني</p>
            <p>موقع الويب</p>
          </div>
        </div>
        <InfoRows />
        <InvoiceTable />
      </div>

      <RowHeaders />
    </div>
  )
}

const sheetTabs = [
  { t: "حول متعقب الفاتورة", c: "w-[162px] bg-[#a9dcea] text-[#1f3f4a]" },
  { t: "تفاصيل الفاتورة", c: "w-[130px] bg-[#78cae0] text-[#1f3f4a]" },
  { t: "الفواتير - رئيسية", c: "w-[135px] bg-[#2ea3bf] text-[#12303a]" },
  { t: "العملاء", c: "w-[67px] bg-[#23788d] text-[#bfe6f0]" },
]

function SheetTabs() {
  return (
    <div className="flex h-[29px] items-center border-t border-[#ababab] bg-[#f5f5f5]">
      <div className="ml-[26px] flex h-[20px] w-[726px] items-center bg-[#e8e8e8]">
        <Slot className="h-[20px] w-[18px] border border-[#c6c6c6] bg-white">
          <svg width="5" height="9" viewBox="0 0 5 9"><path d="M5 0v9L0 4.500z" fill="#777" /></svg>
        </Slot>
        <div className="flex-1" />
        <div className="h-[20px] w-[20px] border border-[#c6c6c6] bg-white" />
        <Slot className="h-[20px] w-[19px] border border-[#c6c6c6] bg-white">
          <svg width="5" height="9" viewBox="0 0 5 9"><path d="M0 0v9l5-4.500z" fill="#777" /></svg>
        </Slot>
      </div>
      <Slot className="w-[32px] text-[12px] text-[#aaa]">⋮</Slot>
      <div className="flex flex-1 items-center">
        <div className="ml-[389px] flex h-[20px] w-[20px] items-center justify-center rounded-full border border-[#777] text-[16px] leading-none text-[#555]">+</div>
        <div className="ml-[35px] h-[23px] w-px bg-[#aaa]" />
        <div className="ml-[2px] flex h-[23px] items-center gap-[5px] text-[17px]">
          {sheetTabs.map((s) => (
            <div key={s.t} dir="rtl" className={`flex h-[23px] items-center justify-center pb-[3px] ${s.c}`}>{s.t}</div>
          ))}
          <div dir="rtl" className="-mt-[4px] ml-[-5px] flex h-[27px] w-[77px] items-center justify-center border-x border-b-2 border-[#d0d0d0] border-b-[#217346] bg-[linear-gradient(180deg,#cfe4ea,#fff)] pb-[2px] text-[#217346]">الفاتورة</div>
        </div>
        <div className="ml-[38px] text-[11px] text-[#bbb]">◂</div>
        <div className="ml-[20px] text-[11px] text-[#bbb]">▸</div>
      </div>
    </div>
  )
}

function StatusBar() {
  return (
    <div className="flex h-[27px] items-center bg-[#217346] font-['Liberation_Sans',sans-serif] text-[13px] text-white">
      <span className="ml-[7px] w-[48px]">100%</span>
      <span className="w-[17px] text-[20px] font-bold leading-none">+</span>
      <div className="relative h-px w-[125px] bg-white">
        <div className="absolute left-[60px] top-[-7px] h-[15px] w-[4px] bg-white" />
      </div>
      <div className="ml-[3px] h-[2px] w-[9px] bg-white" />
      <Slot className="ml-[12px] w-[28px]">
        <svg width="14" height="15" viewBox="0 0 14 15" fill="none" stroke="#fff"><path d="M.5.5h13v14H.5z" /><path d="M7 1h6v9H7z" fill="#fff" /></svg>
      </Slot>
      <Slot className="ml-[13px] w-[28px]">
        <svg width="14" height="15" viewBox="0 0 14 15" fill="none" stroke="#fff"><path d="M.5.5h13v14H.5zM3 4h8M3 7h8M3 10h8" /></svg>
      </Slot>
      <Slot className="ml-[8px] h-[27px] w-[41px] bg-[#0a6332]">
        <svg width="14" height="15" viewBox="0 0 14 15" fill="none" stroke="#fff"><path d="M.5.5h13v14H.5zM.5 5.500h13M.5 10h13M5 0v15M9.500 0v15" /></svg>
      </Slot>
      <div dir="rtl" className="ml-auto mr-[7px] font-['DejaVu_Sans',sans-serif] text-[12px]">جاهز</div>
    </div>
  )
}

function Taskbar() {
  return (
    <div className="flex h-[60px] items-center border-t border-[#c9c9c9] bg-[linear-gradient(90deg,#f2d9e8_0%,#d2e6f1_17%,#dfe0ef_30%,#f2d9e7_50%,#dadff0_60%,#dce2ee_78%,#f0dfe0_84%,#dfe1ee_90%,#dcdfef_100%)] text-[#333]">
      <svg width="26" height="30" viewBox="0 0 26 30" className="ml-[26px]">
        <path d="M18 1a14 14 0 01-2 20C12 25 5 25 1 21c4 8 13 10 19 6C26 21 26 9 18 1z" fill="#ef9a2d" />
      </svg>
      <div className="ml-[12px] flex flex-col text-[14px] leading-[20px]">
        <span>9°C</span>
        <span className="text-[#666]">Clear</span>
      </div>
      <div className="ml-[516px] grid h-[29px] w-[30px] grid-cols-2 gap-[1px]">
        <div className="bg-[#4fb3ec]" />
        <div className="bg-[#37a3e6]" />
        <div className="bg-[#1f8ede]" />
        <div className="bg-[#1683d8]" />
      </div>
      <div className="ml-[18px] flex h-[40px] w-[271px] items-center rounded-[20px] bg-[#f6f7fb] pl-[14px] text-[#555] shadow-[0_1px_1px_rgba(0,0,0,0.2)]">
        <svg width="20" height="20" viewBox="0 0 20 20" fill="none" stroke="#222" strokeWidth="2"><circle cx="9" cy="9" r="7" /><path d="M14 14l5 5" /></svg>
        <span className="ml-[11px] text-[17px]">Search</span>
        <svg width="62" height="36" viewBox="0 0 62 36" className="ml-[108px]">
          <path d="M2 36c1-8 6-10 10-11h8c5 1 10 3 11 11z" fill="#6a5a48" />
          <ellipse cx="16" cy="12" rx="7" ry="10" fill="#d9b79a" />
          <path d="M9 14c0 10 4 14 7 14s7-4 7-14c-2 3-12 3-14 0z" fill="#b8b8b8" />
          <rect x="34" y="26" width="26" height="6" fill="#4a3420" />
          <path d="M36 14l18-5v5H40zM46 9v17" stroke="#222" strokeWidth="3" />
        </svg>
      </div>
      <svg width="22" height="22" viewBox="0 0 22 22" className="ml-[20px]">
        <rect x="0" y="7" width="15" height="15" rx="2" fill="#222" />
        <rect x="8" y="0" width="14" height="14" rx="2" fill="#ddd" />
      </svg>
      <svg width="28" height="28" viewBox="0 0 28 28" className="ml-[32px]">
        <circle cx="14" cy="14" r="14" fill="#4a5cc0" />
        <rect x="7" y="9" width="10" height="10" rx="2" fill="#fff" />
        <path d="M18 12l4-2v8l-4-2z" fill="#fff" />
      </svg>
      <div className="relative ml-[27px] flex flex-col items-center">
        <svg width="30" height="28" viewBox="0 0 30 28">
          <path d="M0 3a2 2 0 012-2h9l3 3h16v24H0z" fill="#f9c437" />
          <path d="M0 3a2 2 0 012-2h9l3 3H0z" fill="#f09a2a" />
          <rect x="9" y="20" width="14" height="8" fill="#1967c4" />
        </svg>
        <div className="absolute -bottom-[9px] h-[4px] w-[7px] rounded-full bg-[#777]" />
      </div>
      <svg width="30" height="28" viewBox="0 0 30 28" className="ml-[25px]">
        <path d="M9 4c3-4 8-4 10 0l4 12H14z" fill="#2f8ee0" />
        <path d="M2 14c1-4 6-6 8-2l5 12c-2 4-9 3-11-1z" fill="#f39a3c" />
        <path d="M17 6h8c4 2 5 10 1 14l-6 4-4-8z" fill="#cb63d6" />
        <circle cx="15" cy="14" r="3.500" fill="#fff" />
      </svg>
      <div className="relative ml-[25px] flex flex-col items-center">
        <svg width="30" height="30" viewBox="0 0 30 30">
          <path d="M15 0a15 15 0 0115 15c0 5-4 7-8 7-5 0-8-2-8-5 0-2 2-3 2-3-6 0-9 5-8 9 1 3 5 7 9 7a15 15 0 01-17-15A15 15 0 0115 0z" fill="#1b86d8" />
          <path d="M15 0a15 15 0 0115 15c0 5-4 7-8 7-4 0-6-2-6-3 6 0 8-3 7-7-2-6-10-8-16-6 2-4 5-6 8-6z" fill="#42c98c" />
        </svg>
        <div className="absolute -bottom-[8px] h-[4px] w-[7px] rounded-full bg-[#777]" />
      </div>
      <svg width="30" height="30" viewBox="0 0 30 30" className="ml-[25px]">
        <path d="M8 7V3a2 2 0 012-2h10a2 2 0 012 2v4" fill="none" stroke="#2aa0e4" strokeWidth="2" />
        <rect x="0" y="6" width="30" height="24" rx="3" fill="#0f4f98" />
        <rect x="9" y="11" width="5.500" height="5.500" fill="#f25022" />
        <rect x="15.500" y="11" width="5.500" height="5.500" fill="#7fba00" />
        <rect x="9" y="17.500" width="5.500" height="5.500" fill="#00a4ef" />
        <rect x="15.500" y="17.500" width="5.500" height="5.500" fill="#ffb900" />
      </svg>
      <div className="relative ml-[16px] flex h-[50px] w-[48px] items-center justify-center rounded-[5px] bg-[#eef0f6]">
        <svg width="28" height="28" viewBox="0 0 28 28">
          <rect x="8" y="3" width="20" height="22" fill="#fff" stroke="#217346" />
          <path d="M17 7h9M17 11h9M17 15h9M17 19h9" stroke="#217346" strokeWidth="2" />
          <path d="M0 3l16-3v28L0 25z" fill="#217346" />
          <path d="M4 8l6 11M10 8L4 19" stroke="#fff" strokeWidth="2" />
        </svg>
        <div className="absolute bottom-[1px] h-[3px] w-[18px] rounded-full bg-[#2a8aa6]" />
      </div>
      <svg width="14" height="9" viewBox="0 0 14 9" fill="none" stroke="#222" strokeWidth="1.600" className="ml-[278px]"><path d="M1 8l6-6 6 6" /></svg>
      <span className="ml-[26px] font-['Liberation_Sans',sans-serif] text-[14px]">ENG</span>
      <svg width="22" height="20" viewBox="0 0 22 20" fill="none" stroke="#333" strokeWidth="1.400" className="ml-[22px]">
        <path d="M1 7c6-6 14-6 20 0M4 10.500c4-4 10-4 14 0M7 14c2-2 6-2 8 0" />
        <circle cx="11" cy="17" r="1.500" fill="#333" />
      </svg>
      <svg width="20" height="20" viewBox="0 0 20 20" fill="none" stroke="#333" className="ml-[8px]">
        <path d="M1 7v6h3l5 4V3L4 7zM12 7c1.500 2 1.500 4 0 6M15 4c3 3 3 9 0 12" strokeWidth="1.300" />
      </svg>
      <svg width="20" height="13" viewBox="0 0 20 13" fill="none" stroke="#333" className="ml-[11px]">
        <rect x=".5" y=".5" width="17" height="12" rx="2" />
        <rect x="3" y="3" width="5" height="7" fill="#333" />
        <path d="M19 5v3" strokeWidth="2" />
      </svg>
      <div className="ml-[20px] flex flex-col items-end font-['Liberation_Sans',sans-serif] text-[15.5px] leading-[21px]">
        <span>21:54</span>
        <span>07/03/2026</span>
      </div>
      <svg width="16" height="20" viewBox="0 0 16 20" className="ml-[12px]">
        <path d="M8 0c4 0 5 4 5 8 0 4 2 6 3 8H0c1-2 3-4 3-8 0-4 1-8 5-8z" fill="#1f5d70" />
        <circle cx="8" cy="18" r="2" fill="#1f5d70" />
      </svg>
    </div>
  )
}

export default function App() {
  return (
    <div className="relative h-[1080px] w-[1920px] overflow-hidden bg-white font-['Roboto','DejaVu_Sans',sans-serif]">
      <TitleArt />
      <div className="relative">
        <TitleBar />
        <TabRow />
      </div>
      <Ribbon />
      <FormulaBar />
      <ColumnHeaders />
      <Sheet />
      <SheetTabs />
      <StatusBar />
      <Taskbar />
      <div dir="rtl" className="pointer-events-none absolute left-[845px] top-[947px] flex w-[232px] flex-col items-center">
        <span className="text-[66px] font-bold leading-[70px] text-[rgba(160,160,160,0.42)]">مستقل</span>
        <span className="whitespace-nowrap font-['Liberation_Sans',sans-serif] text-[36px] font-bold leading-[44px] tracking-[1px] text-[rgba(160,160,160,0.28)]">mostaql.com</span>
      </div>
    </div>
  )
}
